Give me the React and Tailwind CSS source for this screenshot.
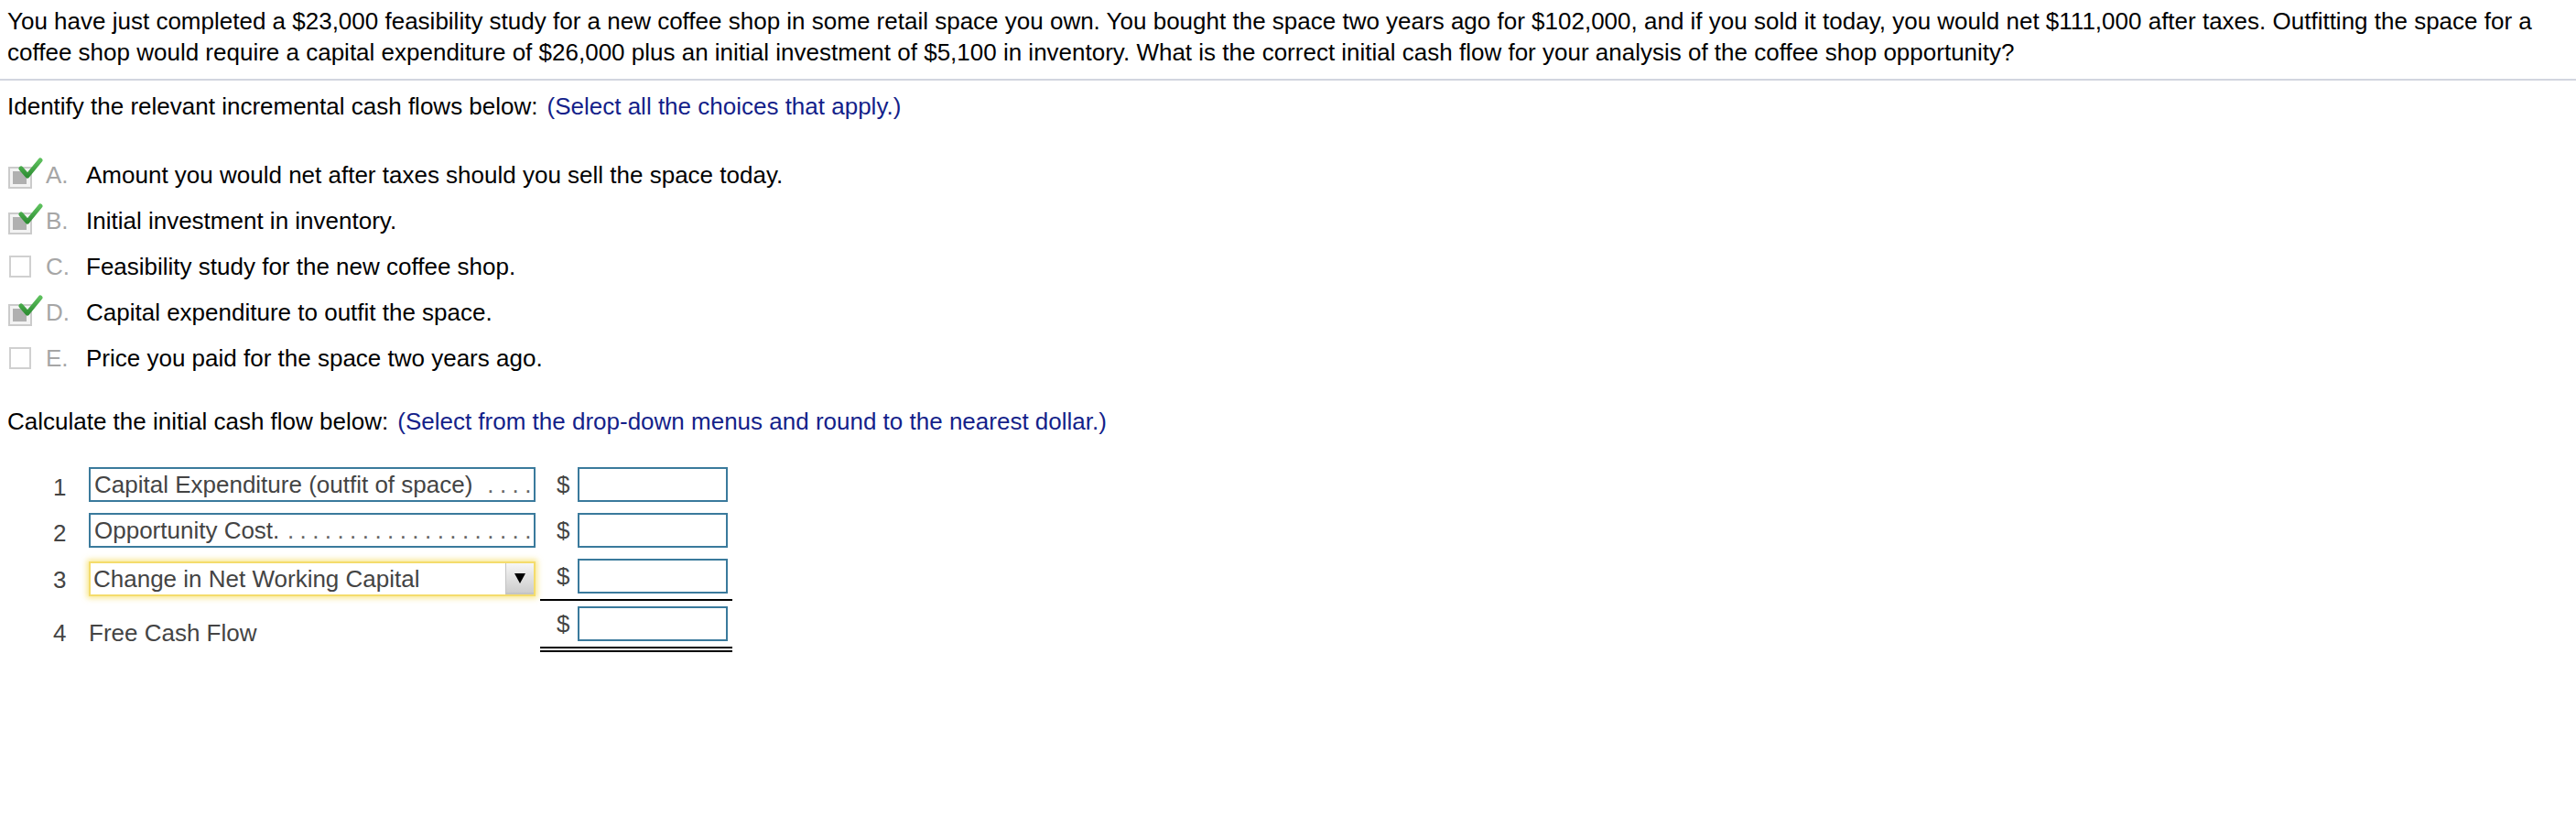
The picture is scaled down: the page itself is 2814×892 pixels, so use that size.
import React from "react"

const choices = [
  { key: "A", text: "Amount you would net after taxes should you sell the space today.", checked: true },
  { key: "B", text: "Initial investment in inventory.", checked: true },
  { key: "C", text: "Feasibility study for the new coffee shop.", checked: false },
  { key: "D", text: "Capital expenditure to outfit the space.", checked: true },
  { key: "E", text: "Price you paid for the space two years ago.", checked: false },
]

function CheckedBox() {
  return (
    <svg width="40" height="38" viewBox="0 0 40 38" className="block">
      <defs>
        <linearGradient id="chk" x1="0" y1="0" x2="0" y2="1">
          <stop offset="0" stopColor="#5cbf5c" />
          <stop offset="1" stopColor="#2f8f34" />
        </linearGradient>
      </defs>
      <rect x="2" y="11" width="24" height="22" fill="#f3f3f3" stroke="#cbcbcb" strokeWidth="2" />
      <rect x="6" y="15" width="15" height="14" fill="#b0b0b0" />
      <path d="M15 12 L22 20 L36 3" fill="none" stroke="url(#chk)" strokeWidth="5" strokeLinecap="round" strokeLinejoin="round" />
    </svg>
  )
}

function EmptyBox() {
  return <div className="ml-[2px] h-[24px] w-[24px] border-2 border-[#d0d0d0] bg-white" />
}

function AmountCell({ under }) {
  const line =
    under === "single"
      ? "pb-[6px] border-b-2 border-black"
      : under === "double"
        ? "pb-[6px] border-b-[6px] border-double border-black"
        : ""
  return (
    <div className={`ml-[5px] flex w-[210px] items-start pl-[18px] ${line}`}>
      <span className="mt-[4px] w-[23px] text-[#444]">$</span>
      <div className="h-[38px] w-[164px] border-2 border-[#3a7a9c] bg-white" />
    </div>
  )
}

function LabelBox({ label, dots }) {
  return (
    <div className="flex h-[38px] w-[488px] items-center justify-between border-2 border-[#3a7a9c] pl-[4px] pr-[3px] text-[#444]">
      <span className="whitespace-nowrap">{label}</span>
      <span className="whitespace-nowrap tracking-[-0.4px] text-[#666]">{" .".repeat(dots)}</span>
    </div>
  )
}

export default function App() {
  return (
    <div className="min-h-screen bg-white font-['Liberation_Sans',Arial,sans-serif] text-[26px] leading-[30px] text-black">
      <div className="px-[8px] pt-[6px]">
        <p className="leading-[34px]">
          You have just completed a $23,000 feasibility study for a new coffee shop in some retail space you own. You bought the space two years ago for $102,000, and if you sold it today, you would net $111,000 after taxes. Outfitting the space for a coffee shop would require a capital expenditure of $26,000 plus an initial investment of $5,100 in inventory. What is the correct initial cash flow for your analysis of the coffee shop opportunity?
        </p>
      </div>
      <div className="mt-[12px] h-[2px] bg-[#d2d5df]" />

      <div className="px-[8px]">
        <p className="mt-[13px]">
          Identify the relevant incremental cash flows below:
          <span className="ml-[10px] text-[#141f8a]">(Select all the choices that apply.)</span>
        </p>

        <ul className="mt-[35px]">
          {choices.map((c) => (
            <li key={c.key} className="flex h-[50px] items-center">
              <div className="w-[42px]">{c.checked ? <CheckedBox /> : <EmptyBox />}</div>
              <span className="w-[44px] text-[#a6a6a6]">{c.key}.</span>
              <span>{c.text}</span>
            </li>
          ))}
        </ul>

        <p className="mt-[29px]">
          Calculate the initial cash flow below:
          <span className="ml-[10px] text-[#141f8a]">(Select from the drop-down menus and round to the nearest dollar.)</span>
        </p>

        <div className="mt-[35px] pl-[50px]">
          <div className="flex items-start">
            <span className="mt-[7px] w-[39px] text-[#444]">1</span>
            <LabelBox label="Capital Expenditure (outfit of space)" dots={4} />
            <AmountCell />
          </div>

          <div className="mt-[12px] flex items-start">
            <span className="mt-[7px] w-[39px] text-[#444]">2</span>
            <LabelBox label="Opportunity Cost." dots={20} />
            <AmountCell />
          </div>

          <div className="mt-[12px] flex items-start">
            <span className="mt-[8px] w-[39px] text-[#444]">3</span>
            <div className="mt-[3px] flex h-[38px] w-[488px] items-stretch border-2 border-[#f4dc6c] bg-white shadow-[0_0_6px_2px_rgba(246,222,100,0.75)]">
              <span className="flex flex-1 items-center whitespace-nowrap pl-[3px] text-[#444]">Change in Net Working Capital</span>
              <div className="flex w-[31px] items-center justify-center border-b-2 border-l border-[#c4c4c4] bg-gradient-to-b from-[#f6f6f6] to-[#cdcdcd]">
                <svg width="14" height="14" viewBox="0 0 14 14">
                  <polygon points="1,2 13,2 7,13" fill="#000" />
                </svg>
              </div>
            </div>
            <AmountCell under="single" />
          </div>

          <div className="mt-[6px] flex items-start">
            <span className="mt-[14px] w-[39px] text-[#444]">4</span>
            <span className="mt-[14px] w-[488px] text-[#444]">Free Cash Flow</span>
            <AmountCell under="double" />
          </div>
        </div>
      </div>
    </div>
  )
}
